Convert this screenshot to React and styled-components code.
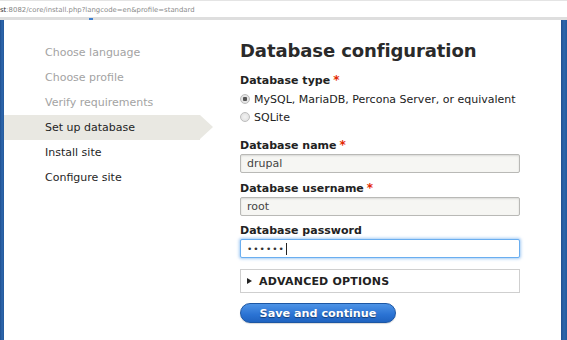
import React from 'react';
import styled, { createGlobalStyle } from 'styled-components';

const GlobalStyle = createGlobalStyle`
	html, body {
		margin: 0;
		padding: 0;
		background: #ffffff;
		font-family: 'DejaVu Sans', 'Noto Sans', sans-serif;
	}
	* {
		box-sizing: border-box;
	}
`;

const steps = [
	{ label: 'Choose language', state: 'done' },
	{ label: 'Choose profile', state: 'done' },
	{ label: 'Verify requirements', state: 'done' },
	{ label: 'Set up database', state: 'active' },
	{ label: 'Install site', state: 'todo' },
	{ label: 'Configure site', state: 'todo' },
];

const Page = styled.div`
	width: 567px;
	height: 340px;
	display: flex;
	flex-direction: column;
	overflow: hidden;
`;

const UrlBar = styled.div`
	position: relative;
	height: 20px;
	flex-shrink: 0;
	border-top: 1px solid #e4e4e4;
	border-bottom: 3px solid #dedede;
	display: flex;
	align-items: center;
	font-size: 6.9px;
	color: #8a8a8a;
	white-space: nowrap;
	padding-top: 2px;
`;

const Host = styled.span`
	color: #333;
`;

const TabMark = styled.span`
	position: absolute;
	left: 89px;
	bottom: -3px;
	width: 4px;
	height: 2px;
	background: #3d7fd0;
`;

const Frame = styled.div`
	flex: 1;
	display: flex;
`;

const Edge = styled.div`
	width: ${(p) => p.$w}px;
	flex-shrink: 0;
	background: linear-gradient(to right, #1f4f8f, #2d67ad, #24599b);
`;

const Content = styled.div`
	flex: 1;
	display: flex;
	background: #fff;
`;

const Sidebar = styled.ul`
	list-style: none;
	margin: 0;
	padding: 20px 0 0 0;
	width: 236px;
	flex-shrink: 0;
`;

const Step = styled.li`
	position: relative;
	height: 25px;
	width: 196px;
	display: flex;
	align-items: center;
	padding-left: 41px;
	font-size: 11px;
	color: ${(p) => (p.$state === 'done' ? '#a3a3a3' : '#1f1f1f')};
	background: ${(p) => (p.$state === 'active' ? '#e9e8e2' : 'transparent')};
	&::after {
		content: '';
		display: ${(p) => (p.$state === 'active' ? 'block' : 'none')};
		position: absolute;
		right: -13px;
		top: 0;
		border-top: 12.5px solid transparent;
		border-bottom: 12.5px solid transparent;
		border-left: 13px solid #e9e8e2;
	}
`;

const Main = styled.main`
	width: 280px;
	padding-top: 19px;
`;

const Title = styled.h1`
	margin: 0 0 10px 0;
	font-size: 18px;
	line-height: 24px;
	font-weight: bold;
	color: #2a2a2a;
	letter-spacing: -0.1px;
`;

const Label = styled.div`
	font-size: 11px;
	line-height: 14px;
	font-weight: bold;
	color: #222;
	margin-bottom: ${(p) => (p.$tight ? 1 : 2)}px;
`;

const Required = styled.span`
	color: #e32700;
	margin-left: 3px;
	font-size: 12px;
`;

const RadioGroup = styled.div`
	margin-bottom: 12px;
`;

const RadioRow = styled.label`
	height: 18px;
	display: flex;
	align-items: center;
	font-size: 11px;
	color: #222;
`;

const RadioDot = styled.span`
	width: 10px;
	height: 10px;
	border-radius: 50%;
	border: 1px solid #bdbdbd;
	background: radial-gradient(circle, ${(p) => (p.$checked ? '#555 0, #555 2px, #e6e6e6 2.5px' : '#f3f3f3 0')}, #dcdcdc 100%);
	margin-right: 4px;
	margin-top: -1px;
`;

const Field = styled.div`
	margin-bottom: 8px;
`;

const Input = styled.div`
	height: 19px;
	width: 280px;
	display: flex;
	align-items: center;
	padding-left: 6px;
	font-size: 11px;
	color: #444;
	border: 1px solid ${(p) => (p.$focus ? '#6aaef0' : '#b9b9b6')};
	border-radius: 2px;
	background: ${(p) => (p.$focus ? '#fff' : '#f6f6f3')};
	box-shadow: ${(p) => (p.$focus ? '0 0 3px 1px rgba(90, 160, 235, 0.55)' : 'inset 0 1px 2px rgba(0,0,0,0.12)')};
`;

const Dots = styled.span`
	letter-spacing: 1px;
	font-size: 9px;
	color: #333;
`;

const Caret = styled.span`
	width: 1px;
	height: 12px;
	background: #222;
	margin-left: 1px;
`;

const Details = styled.div`
	margin-top: 11px;
	height: 24px;
	width: 280px;
	border: 1px solid #cfcfcf;
	display: flex;
	align-items: center;
	padding-left: 6px;
	font-size: 11px;
	font-weight: bold;
	color: #222;
	letter-spacing: 0.2px;
`;

const Triangle = styled.span`
	width: 0;
	height: 0;
	border-top: 3.5px solid transparent;
	border-bottom: 3.5px solid transparent;
	border-left: 5px solid #222;
	margin-right: 7px;
`;

const Button = styled.button`
	margin-top: 10px;
	width: 156px;
	height: 20px;
	border-radius: 10px;
	border: 1px solid #1c56a3;
	background: linear-gradient(to bottom, #4d93e6, #2a72d3 60%, #1f63c0);
	color: #fff;
	font-family: 'DejaVu Sans', sans-serif;
	font-size: 11.2px;
	font-weight: bold;
	text-shadow: 0 1px 1px rgba(0, 0, 0, 0.45);
	padding: 0;
	box-shadow: 0 1px 1px rgba(0, 0, 0, 0.15);
`;

const App = () => {
	return (
		<Page>
			<GlobalStyle />
			<UrlBar>
				<Host>st</Host>:8082/core/install.php?langcode=en&amp;profile=standard
				<TabMark />
			</UrlBar>
			<Frame>
				<Edge $w={4} />
				<Content>
					<Sidebar>
						{steps.map((s) => (
							<Step key={s.label} $state={s.state}>
								{s.label}
							</Step>
						))}
					</Sidebar>
					<Main>
						<Title>Database configuration</Title>
						<Label>
							Database type<Required>*</Required>
						</Label>
						<RadioGroup>
							<RadioRow>
								<RadioDot $checked />
								MySQL, MariaDB, Percona Server, or equivalent
							</RadioRow>
							<RadioRow>
								<RadioDot />
								SQLite
							</RadioRow>
						</RadioGroup>
						<Field>
							<Label $tight>
								Database name<Required>*</Required>
							</Label>
							<Input>drupal</Input>
						</Field>
						<Field>
							<Label $tight>
								Database username<Required>*</Required>
							</Label>
							<Input>root</Input>
						</Field>
						<Field>
							<Label $tight>Database password</Label>
							<Input $focus>
								<Dots>••••••</Dots>
								<Caret />
							</Input>
						</Field>
						<Details>
							<Triangle />
							ADVANCED OPTIONS
						</Details>
						<Button>Save and continue</Button>
					</Main>
				</Content>
				<Edge $w={6} />
			</Frame>
		</Page>
	);
};

export default App;
